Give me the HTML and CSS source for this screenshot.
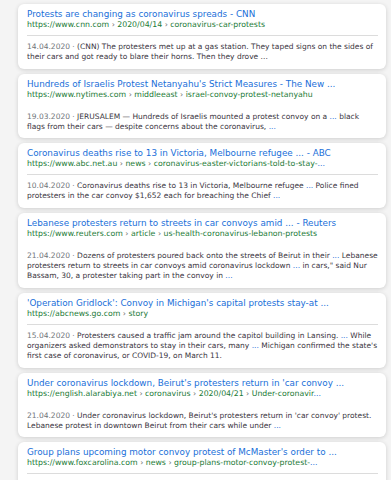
FILE: index.html
```html
<!DOCTYPE html>
<html lang="en">
<head>
  <meta charset="UTF-8">
  <title>Search results</title>
  <link rel="stylesheet" href="styles.css">
</head>
<body>

  <div class="results">

    <div class="card">
      <a class="title" href="#">Protests are changing as coronavirus spreads - CNN</a>
      <div class="url">https://www.cnn.com <span class="sep">›</span> 2020/04/14 <span class="sep">›</span> coronavirus-car-protests</div>
      <div class="rule"></div>
      <p class="snippet"><span class="date">14.04.2020 · </span>(CNN) The protesters met up at a gas station. They taped signs on the sides of their cars and got ready to blare their horns. Then they drove ...</p>
    </div>

    <div class="card faint">
      <a class="title" href="#">Hundreds of Israelis Protest Netanyahu's Strict Measures - The New ...</a>
      <div class="url">https://www.nytimes.com <span class="sep">›</span> middleeast <span class="sep">›</span> israel-convoy-protest-netanyahu</div>
      <div class="rule"></div>
      <p class="snippet"><span class="date">19.03.2020 · </span>JERUSALEM — Hundreds of Israelis mounted a protest convoy on a <span class="dots">...</span> black flags from their cars — despite concerns about the coronavirus, <span class="dots">...</span></p>
    </div>

    <div class="card">
      <a class="title" href="#">Coronavirus deaths rise to 13 in Victoria, Melbourne refugee ... - ABC</a>
      <div class="url">https://www.abc.net.au <span class="sep">›</span> news <span class="sep">›</span> coronavirus-easter-victorians-told-to-stay-<span class="dots">...</span></div>
      <div class="rule"></div>
      <p class="snippet"><span class="date">10.04.2020 · </span>Coronavirus deaths rise to 13 in Victoria, Melbourne refugee <span class="dots">...</span> Police fined protesters in the car convoy $1,652 each for breaching the Chief <span class="dots">...</span></p>
    </div>

    <div class="card faint">
      <a class="title" href="#">Lebanese protesters return to streets in car convoys amid ... - Reuters</a>
      <div class="url">https://www.reuters.com <span class="sep">›</span> article <span class="sep">›</span> us-health-coronavirus-lebanon-protests</div>
      <div class="rule"></div>
      <p class="snippet"><span class="date">21.04.2020 · </span>Dozens of protesters poured back onto the streets of Beirut in their <span class="dots">...</span> Lebanese protesters return to streets in car convoys amid coronavirus lockdown <span class="dots">...</span> in cars," said Nur Bassam, 30, a protester taking part in the convoy in <span class="dots">...</span></p>
    </div>

    <div class="card">
      <a class="title" href="#">'Operation Gridlock': Convoy in Michigan's capital protests stay-at ...</a>
      <div class="url">https://abcnews.go.com <span class="sep">›</span> story</div>
      <div class="rule"></div>
      <p class="snippet"><span class="date">15.04.2020 · </span>Protesters caused a traffic jam around the capitol building in Lansing. <span class="dots">...</span> While organizers asked demonstrators to stay in their cars, many <span class="dots">...</span> Michigan confirmed the state's first case of coronavirus, or COVID-19, on March 11.</p>
    </div>

    <div class="card faint">
      <a class="title" href="#">Under coronavirus lockdown, Beirut's protesters return in 'car convoy ...</a>
      <div class="url">https://english.alarabiya.net <span class="sep">›</span> coronavirus <span class="sep">›</span> 2020/04/21 <span class="sep">›</span> Under-coronavir<span class="dots">...</span></div>
      <div class="rule"></div>
      <p class="snippet"><span class="date">21.04.2020 · </span>Under coronavirus lockdown, Beirut's protesters return in 'car convoy' protest. Lebanese protest in downtown Beirut from their cars while under <span class="dots">...</span></p>
    </div>

    <div class="card">
      <a class="title" href="#">Group plans upcoming motor convoy protest of McMaster's order to ...</a>
      <div class="url">https://www.foxcarolina.com <span class="sep">›</span> news <span class="sep">›</span> group-plans-motor-convoy-protest-<span class="dots">...</span></div>
      <div class="rule"></div>
      <p class="snippet"><span class="date">21.04.2020 · </span>A group is planning a motor convoy protest of the governor's order.</p>
    </div>

  </div>

</body>
</html>
```

FILE: styles.css
```css
body {
  margin: 0;
  background: #f4f4f4;
  font-family: "DejaVu Sans", Verdana, sans-serif;
}
.results {
  display: flex;
  flex-direction: column;
  gap: 5px;
  padding: 4px 5px 0 18px;
}
.card {
  background: #fff;
  border-radius: 6px;
  box-shadow: 0 1px 4px rgba(0, 0, 0, 0.16);
  padding: 5px 8px 6px 9px;
}
.title {
  display: block;
  color: #1a6fd9;
  text-decoration: none;
  font-size: 8.8px;
  line-height: 11px;
  white-space: nowrap;
}
.url {
  color: #1b7a36;
  font-size: 7.8px;
  line-height: 10px;
  white-space: nowrap;
}
.sep {
  color: #777;
}
.dots {
  color: #1a6fd9;
}
.rule {
  height: 1px;
  margin: 5px 0 6px;
  background: #dcdcdc;
}
.faint .rule {
  background: transparent;
}
.snippet {
  margin: 0;
  color: #3a3541;
  font-size: 7.5px;
  line-height: 10.3px;
}
.date {
  color: #70757a;
}
```
